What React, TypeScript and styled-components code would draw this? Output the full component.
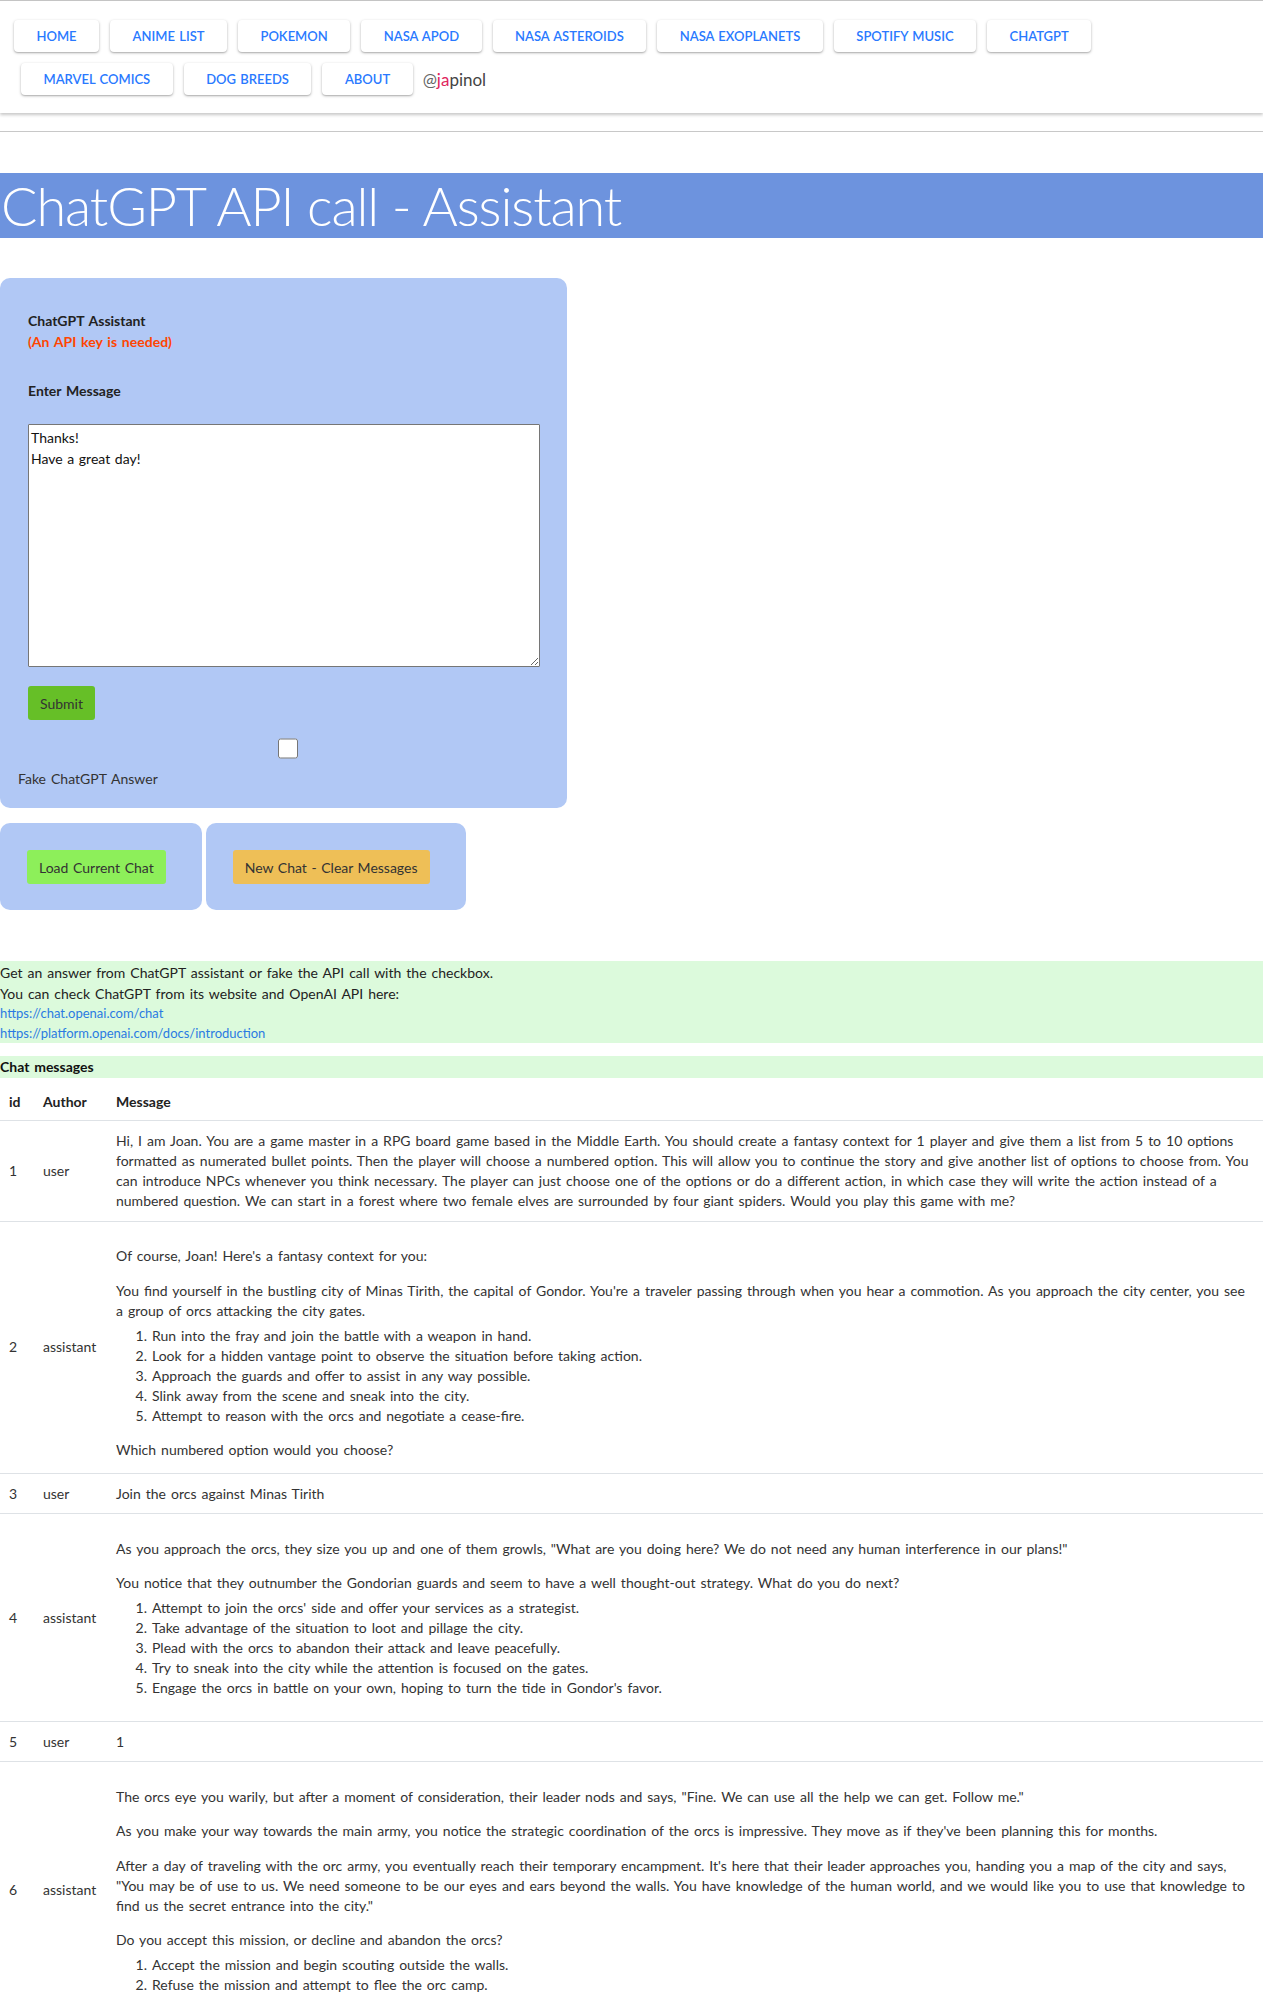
import React from "react";
import styled, { createGlobalStyle } from "styled-components";

const Global = createGlobalStyle`
  html { overflow-y: scroll; }
  html::-webkit-scrollbar { width: 3px; background: #f1f1f1; }
  html::-webkit-scrollbar-thumb { background: #dadada; }
  body {
    margin: 0;
    font-family: "Lato", "Open Sans", sans-serif;
    font-size: 14px;
    word-spacing: 1.4px;
    color: #212529;
    background: #ffffff;
  }
  * { box-sizing: border-box; }
`;

const Page = styled.div`
  min-height: 4900px;
`;

const Nav = styled.nav`
  border-top: 1px solid #c4c4c4;
  box-shadow: 0 2px 3px rgba(0, 0, 0, 0.22);
  padding: 19px 0 18px;
  display: flex;
  flex-direction: column;
  gap: 11px;
`;

const NavRow = styled.div<{ $indent: number }>`
  display: flex;
  align-items: center;
  gap: 11px;
  padding-left: ${(p) => p.$indent}px;
`;

const NavButton = styled.a`
  height: 32px;
  padding: 0 22.5px;
  display: inline-flex;
  align-items: center;
  background: #fff;
  border-radius: 4px;
  box-shadow: 0 1px 3px rgba(0, 0, 0, 0.28), 0 1px 1px rgba(0, 0, 0, 0.1);
  color: #2979ff;
  font-size: 13px;
  font-weight: 600;
  text-transform: uppercase;
  text-decoration: none;
  word-spacing: 1px;
`;

const Handle = styled.span`
  font-size: 17px;
  color: #444;
  margin-left: -1px;
  word-spacing: normal;
`;

const HandleAt = styled.span`
  color: #666;
`;

const HandleAccent = styled.span`
  color: #e0245e;
`;

const Rule = styled.hr`
  margin: 18px 0 0;
  border: 0;
  border-top: 1px solid #c8c8c8;
`;

const TitleBar = styled.h1`
  margin: 41px 0 0;
  height: 65px;
  background: #6d93de;
  color: #fff;
  font-weight: 300;
  font-size: 54px;
  line-height: 65px;
  letter-spacing: -1.1px;
  word-spacing: normal;
  padding-left: 1px;
  white-space: nowrap;
`;

const FormPanel = styled.section`
  margin-top: 40px;
  width: 567px;
  background: #b1c8f5;
  border-radius: 10px;
  padding: 32px 27px 19px 18px;
  display: flex;
  flex-direction: column;
`;

const Field = styled.div`
  padding-left: 10px;
`;

const Label = styled.div<{ $warn?: boolean }>`
  font-weight: 700;
  line-height: 21px;
  color: ${(p) => (p.$warn ? "#ff4500" : "#222")};
`;

const LabelGap = styled(Label)`
  margin-top: 28px;
`;

const MessageBox = styled.textarea`
  display: block;
  margin-top: 23px;
  width: 512px;
  height: 243px;
  border: 1px solid #767676;
  border-radius: 1px;
  padding: 2px 2px;
  font-family: "Lato", "Open Sans", sans-serif;
  font-size: 14px;
  line-height: 21px;
  word-spacing: 1px;
  color: #111;
  background: #fff;
  resize: vertical;
`;

const ActionButton = styled.button<{ $bg: string }>`
  height: 34px;
  padding: 0 12px;
  border: 0;
  border-radius: 3px;
  background: ${(p) => p.$bg};
  color: #333;
  font-family: "Lato", "Open Sans", sans-serif;
  font-size: 14px;
  word-spacing: 1px;
  cursor: pointer;
`;

const SubmitRow = styled.div`
  margin-top: 19px;
  padding-left: 10px;
`;

const CheckRow = styled.div`
  margin-top: 18px;
  padding-left: 18px;
  display: flex;
  justify-content: center;
`;

const Check = styled.input`
  margin: 0;
  width: 20px;
  height: 21px;
`;

const CheckLabel = styled.div`
  margin-top: 9px;
  line-height: 21px;
  color: #333;
`;

const ButtonPanels = styled.div`
  margin-top: 15px;
  display: flex;
  gap: 4px;
`;

const SmallPanel = styled.div`
  background: #b1c8f5;
  border-radius: 10px;
  padding: 27px 36px 26px 27px;
`;

const InfoBox = styled.div`
  margin-top: 51px;
  background: #dcfadc;
  padding: 1px 0 0;
  line-height: 21px;
  color: #222;
`;

const InfoLink = styled.a`
  display: block;
  color: #2a7ae2;
  font-size: 13px;
  line-height: 19.5px;
  word-spacing: normal;
  text-decoration: none;
`;

const SectionBar = styled.div`
  margin-top: 13px;
  background: #dcfadc;
  font-weight: 700;
  line-height: 22px;
  color: #111;
`;

const Table = styled.table`
  margin-top: 4px;
  width: 100%;
  border-collapse: collapse;
  color: #333;
`;

const Th = styled.th<{ $w?: number }>`
  text-align: left;
  font-weight: 700;
  color: #222;
  padding: 10px 9px 8px;
  line-height: 20px;
  border-bottom: 1px solid #dee2e6;
  width: ${(p) => (p.$w ? `${p.$w}px` : "auto")};
`;

const Td = styled.td`
  padding: 10px 9px 9.5px;
  line-height: 20px;
  vertical-align: middle;
  border-bottom: 1px solid #dee2e6;
`;

const MsgP = styled.p`
  margin: 14.5px 0 3px;
`;

const MsgList = styled.ol`
  margin: 5px 0 13px;
  padding-left: 36px;
`;

type Block = { p?: string; ol?: string[] };
type Msg = { id: number; author: string; text?: string; blocks?: Block[] };

const messages: Msg[] = [
  {
    id: 1,
    author: "user",
    text:
      "Hi, I am Joan. You are a game master in a RPG board game based in the Middle Earth. You should create a fantasy context for 1 player and give them a list from 5 to 10 options formatted as numerated bullet points. Then the player will choose a numbered option. This will allow you to continue the story and give another list of options to choose from. You can introduce NPCs whenever you think necessary. The player can just choose one of the options or do a different action, in which case they will write the action instead of a numbered question. We can start in a forest where two female elves are surrounded by four giant spiders. Would you play this game with me?",
  },
  {
    id: 2,
    author: "assistant",
    blocks: [
      { p: "Of course, Joan! Here's a fantasy context for you:" },
      {
        p: "You find yourself in the bustling city of Minas Tirith, the capital of Gondor. You're a traveler passing through when you hear a commotion. As you approach the city center, you see a group of orcs attacking the city gates.",
      },
      {
        ol: [
          "Run into the fray and join the battle with a weapon in hand.",
          "Look for a hidden vantage point to observe the situation before taking action.",
          "Approach the guards and offer to assist in any way possible.",
          "Slink away from the scene and sneak into the city.",
          "Attempt to reason with the orcs and negotiate a cease-fire.",
        ],
      },
      { p: "Which numbered option would you choose?" },
    ],
  },
  { id: 3, author: "user", text: "Join the orcs against Minas Tirith" },
  {
    id: 4,
    author: "assistant",
    blocks: [
      {
        p: 'As you approach the orcs, they size you up and one of them growls, "What are you doing here? We do not need any human interference in our plans!"',
      },
      {
        p: "You notice that they outnumber the Gondorian guards and seem to have a well thought-out strategy. What do you do next?",
      },
      {
        ol: [
          "Attempt to join the orcs' side and offer your services as a strategist.",
          "Take advantage of the situation to loot and pillage the city.",
          "Plead with the orcs to abandon their attack and leave peacefully.",
          "Try to sneak into the city while the attention is focused on the gates.",
          "Engage the orcs in battle on your own, hoping to turn the tide in Gondor's favor.",
        ],
      },
    ],
  },
  { id: 5, author: "user", text: "1" },
  {
    id: 6,
    author: "assistant",
    blocks: [
      {
        p: 'The orcs eye you warily, but after a moment of consideration, their leader nods and says, "Fine. We can use all the help we can get. Follow me."',
      },
      {
        p: "As you make your way towards the main army, you notice the strategic coordination of the orcs is impressive. They move as if they've been planning this for months.",
      },
      {
        p: 'After a day of traveling with the orc army, you eventually reach their temporary encampment. It\'s here that their leader approaches you, handing you a map of the city and says, "You may be of use to us. We need someone to be our eyes and ears beyond the walls. You have knowledge of the human world, and we would like you to use that knowledge to find us the secret entrance into the city."',
      },
      { p: "Do you accept this mission, or decline and abandon the orcs?" },
      {
        ol: [
          "Accept the mission and begin scouting outside the walls.",
          "Refuse the mission and attempt to flee the orc camp.",
        ],
      },
    ],
  },
];

const navRow1 = [
  "Home",
  "Anime List",
  "Pokemon",
  "NASA APOD",
  "NASA Asteroids",
  "NASA Exoplanets",
  "Spotify Music",
  "ChatGPT",
];
const navRow2 = ["Marvel Comics", "Dog Breeds", "About"];

export default function App() {
  return (
    <Page>
      <Global />
      <Nav>
        <NavRow $indent={14}>
          {navRow1.map((n) => (
            <NavButton key={n} href="#">
              {n}
            </NavButton>
          ))}
        </NavRow>
        <NavRow $indent={21}>
          {navRow2.map((n) => (
            <NavButton key={n} href="#">
              {n}
            </NavButton>
          ))}
          <Handle>
            <HandleAt>@</HandleAt>
            <HandleAccent>ja</HandleAccent>pinol
          </Handle>
        </NavRow>
      </Nav>
      <Rule />
      <TitleBar>ChatGPT API call - Assistant</TitleBar>

      <FormPanel>
        <Field>
          <Label>ChatGPT Assistant</Label>
          <Label $warn>(An API key is needed)</Label>
          <LabelGap>Enter Message</LabelGap>
          <MessageBox defaultValue={"Thanks!\nHave a great day!"} />
        </Field>
        <SubmitRow>
          <ActionButton $bg="#66bf27">Submit</ActionButton>
        </SubmitRow>
        <CheckRow>
          <Check type="checkbox" />
        </CheckRow>
        <CheckLabel>Fake ChatGPT Answer</CheckLabel>
      </FormPanel>

      <ButtonPanels>
        <SmallPanel>
          <ActionButton $bg="#8def5a">Load Current Chat</ActionButton>
        </SmallPanel>
        <SmallPanel>
          <ActionButton $bg="#eebf57">New Chat - Clear Messages</ActionButton>
        </SmallPanel>
      </ButtonPanels>

      <InfoBox>
        <div>Get an answer from ChatGPT assistant or fake the API call with the checkbox.</div>
        <div>You can check ChatGPT from its website and OpenAI API here:</div>
        <InfoLink href="#">https://chat.openai.com/chat</InfoLink>
        <InfoLink href="#">https://platform.openai.com/docs/introduction</InfoLink>
      </InfoBox>

      <SectionBar>Chat messages</SectionBar>

      <Table>
        <thead>
          <tr>
            <Th $w={34}>id</Th>
            <Th $w={73}>Author</Th>
            <Th>Message</Th>
          </tr>
        </thead>
        <tbody>
          {messages.map((m) => (
            <tr key={m.id}>
              <Td>{m.id}</Td>
              <Td>{m.author}</Td>
              <Td>
                {m.text ??
                  m.blocks!.map((b, i) =>
                    b.p ? (
                      <MsgP key={i}>{b.p}</MsgP>
                    ) : (
                      <MsgList key={i}>
                        {b.ol!.map((li) => (
                          <li key={li}>{li}</li>
                        ))}
                      </MsgList>
                    )
                  )}
              </Td>
            </tr>
          ))}
        </tbody>
      </Table>
    </Page>
  );
}
